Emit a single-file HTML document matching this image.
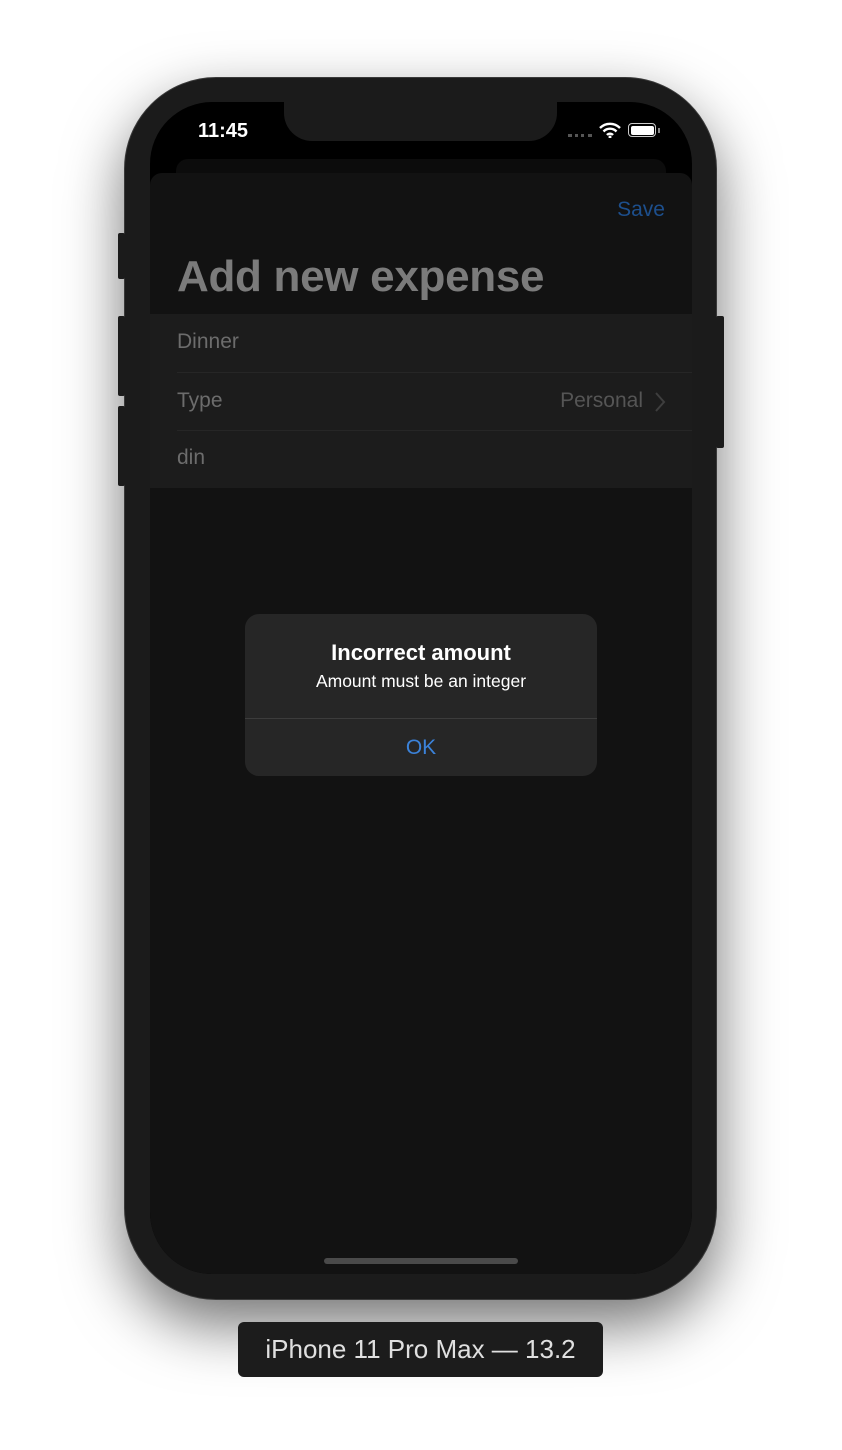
<!DOCTYPE html>
<html><head><style>
body{margin:0;width:842px;height:1450px;background:#fff;position:relative;overflow:hidden;font-family:"Liberation Sans",sans-serif}
.a{position:absolute}
</style></head><body>
<div class="a" style="left:124px;top:77px;width:593px;height:1223px;border-radius:92px;background:#1b1b1b;box-shadow:0 25px 60px rgba(0,0,0,.55);border:1px solid #3a3a3a;box-sizing:border-box"></div>
<div class="a" style="left:118px;top:233px;width:7px;height:46px;background:#1b1b1b;border-radius:2px"></div>
<div class="a" style="left:118px;top:316px;width:7px;height:80px;background:#1b1b1b;border-radius:2px"></div>
<div class="a" style="left:118px;top:406px;width:7px;height:80px;background:#1b1b1b;border-radius:2px"></div>
<div class="a" style="left:716px;top:316px;width:8px;height:132px;background:#1b1b1b;border-radius:2px"></div>
<div class="a" style="left:150px;top:102px;width:542px;height:1172px;border-radius:62px;background:#000;overflow:hidden">
  <div class="a" style="left:134px;top:-2px;width:273px;height:41px;background:#1b1b1b;border-radius:0 0 28px 28px"></div>
  <div class="a" style="left:48px;top:18px;color:#fff;font-size:20px;font-weight:bold">11:45</div>
  <div class="a" style="left:418px;top:32px;width:24px;height:3px;border-top:3px dotted #555"></div>
  <svg class="a" style="left:449px;top:20px" width="22" height="16" viewBox="0 0 22 16"><path d="M1 6a14 14 0 0 1 20 0M4.5 9.5a9 9 0 0 1 13 0M8 13a4 4 0 0 1 6 0" stroke="#fff" stroke-width="2.4" fill="none"/><circle cx="11" cy="15" r="1.5" fill="#fff"/></svg>
  <div class="a" style="left:478px;top:21px;width:28px;height:14px;border:1.5px solid #ccc;border-radius:4px;box-sizing:border-box;padding:1.5px"><div style="background:#fff;width:100%;height:100%;border-radius:2px"></div></div>
  <div class="a" style="left:508px;top:26px;width:2px;height:5px;background:#888"></div>
  <div class="a" style="left:26px;top:57px;width:490px;height:40px;background:#0c0c0c;border-radius:12px"></div>
  <div class="a" style="left:0;top:71px;width:542px;height:1110px;background:#121212;border-radius:12px 12px 0 0">
    <div class="a" style="right:27px;top:25px;color:#1d4f8d;font-size:21px">Save</div>
    <div class="a" style="left:27px;top:79px;color:#7b7b7b;font-size:44px;font-weight:bold;letter-spacing:-0.3px">Add new expense</div>
    <div class="a" style="left:0;top:141px;width:542px;height:174px;background:#1c1c1c;color:#6c6c6c;font-size:21px">
      <div class="a" style="left:27px;top:16px">Dinner</div>
      <div class="a" style="left:27px;top:58px;right:0;height:1px;background:#262626"></div>
      <div class="a" style="left:27px;top:75px">Type</div>
      <div class="a" style="right:49px;top:75px;color:#555">Personal</div>
      <svg class="a" style="right:26px;top:77px" width="12" height="22"><path d="M2 2l8 9-8 9" stroke="#3e3e3e" stroke-width="2" fill="none"/></svg>
      <div class="a" style="left:27px;top:116px;right:0;height:1px;background:#262626"></div>
      <div class="a" style="left:27px;top:132px">din</div>
    </div>
  </div>
  <div class="a" style="left:174px;top:1156px;width:194px;height:6px;border-radius:3px;background:#4a4a4a"></div>
</div>
<div class="a" style="left:245px;top:614px;width:352px;height:162px;background:#262626;border-radius:14px;text-align:center;color:#fff">
  <div style="margin-top:26px;font-size:22px;font-weight:bold">Incorrect amount</div>
  <div style="margin-top:5px;font-size:17.5px">Amount must be an integer</div>
  <div class="a" style="left:0;top:104px;width:352px;height:1px;background:#3c3c3c"></div>
  <div class="a" style="left:0;top:122px;width:352px;color:#3b82d9;font-size:21px">OK</div>
</div>
<div class="a" style="left:238px;top:1322px;width:365px;height:55px;background:#1c1c1c;border-radius:6px;color:#e0e0e0;font-size:26px;text-align:center;line-height:55px">iPhone 11 Pro Max — 13.2</div>
</body></html>
